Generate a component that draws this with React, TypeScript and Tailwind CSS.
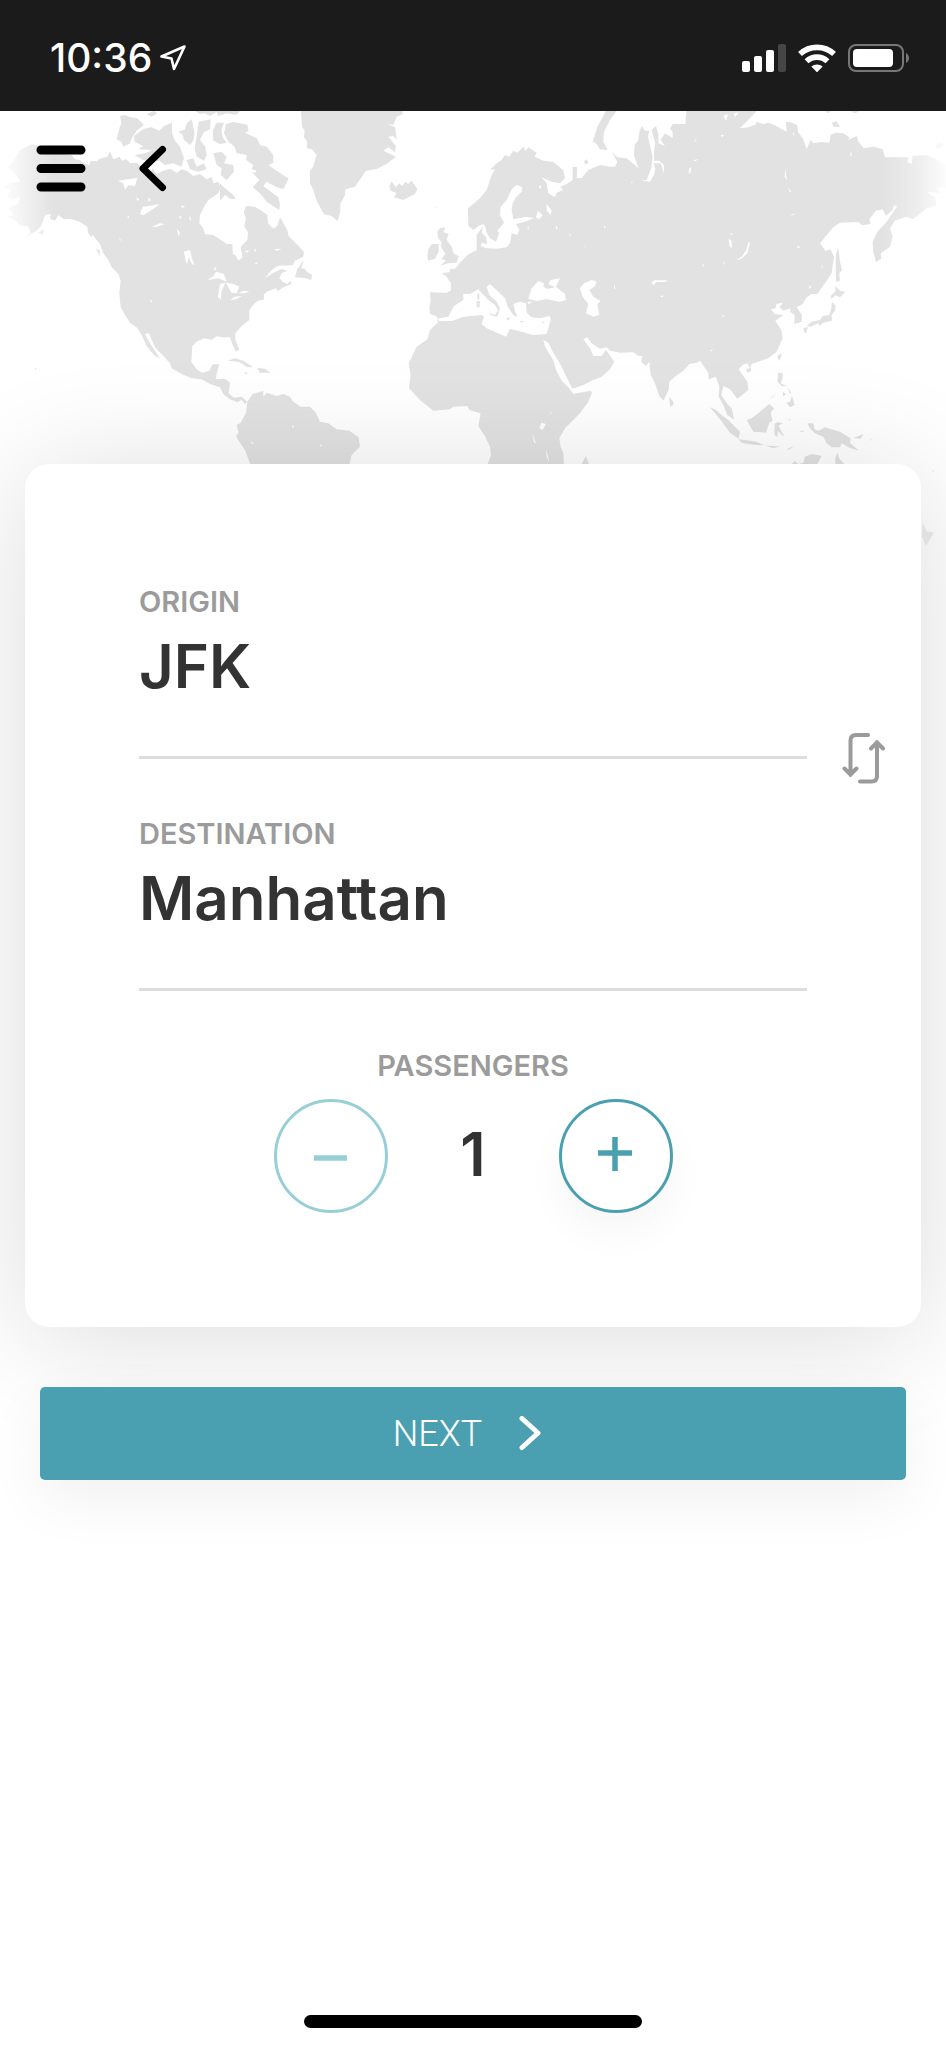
import { useState } from "react";

const poly = (...shapes: string[]) => shapes.map((s) => `M${s}Z`).join("");

const americas = poly(
  // mainland North America
  "95 133 130 140 160 145 185 160 215 165 225 178 240 180 250 190 268 195 272 182 290 184 300 176 322 170 330 154 340 178 360 170 365 182 380 178 390 190 410 188 430 205 450 218 458 205 470 222 490 212 510 206 530 218 545 208 562 214 580 228 600 222 620 238 635 230 640 250 655 245 662 262 655 280 640 290 625 300 610 325 600 345 598 370 608 382 616 403 640 405 660 418 680 432 697 433 699 462 708 468 715 482 728 472 722 440 742 420 744 398 733 378 738 355 731 338 738 318 765 320 785 332 802 345 804 370 820 386 832 378 840 352 852 372 862 390 866 408 890 432 912 456 910 470 885 482 878 496 835 497 815 510 794 535 820 518 845 507 862 512 845 520 838 535 848 545 862 552 872 542 875 552 850 562 832 574 828 565 800 575 791 584 793 598 772 603 755 620 748 632 748 660 725 678 706 700 706 718 718 750 708 755 698 735 690 712 665 712 650 709 635 719 612 715 590 725 577 738 574 785 590 808 606 818 628 812 638 793 658 793 650 820 648 838 675 836 690 848 686 880 702 893 725 890 742 905 735 912 725 900 712 907 690 898 670 882 660 862 630 852 605 838 575 835 545 822 515 805 510 790 490 768 465 742 447 700 435 702 450 730 465 752 480 776 462 765 440 738 425 705 412 684 390 668 375 645 362 620 358 580 362 542 355 522 335 502 325 480 310 460 300 432 285 415 268 385 240 365 210 356 192 358 175 345 165 362 150 356 152 342 135 345 125 375 110 392 70 415 35 440 62 420 92 398 85 380 60 376 45 360 22 350 40 345 25 325 55 310 60 290 38 300 20 288 34 270 10 262 30 250 62 245 45 222 22 200 40 185 60 150",
  "360 48 375 45 392 52 412 55 432 75 410 92 395 115 390 130 370 140 364 126 350 118 358 85 364 70",
  "432 86 455 82 478 92 492 78 516 68 516 100 525 122 540 140 552 175 545 200 520 190 495 195 478 182 450 186 430 180 404 166 440 158 456 150 415 148 430 138 404 126 402 108",
  "535 95 555 88 560 70 575 58 584 100 580 122 570 135 552 120 548 104",
  "596 65 632 58 630 88 612 96 600 120 616 140 620 165 612 182 590 170 584 145 590 110",
  "650 68 672 68 664 90 668 112 680 128 660 132 640 122 638 92",
  "678 72 700 66 742 74 746 92 735 98 770 115 780 135 800 140 820 165 820 188 805 195 830 212 866 236 850 268 830 262 800 245 790 258 835 292 840 312 838 330 800 305 780 280 758 262 778 240 752 212 760 195 738 180 740 165 710 160 704 140 685 125 672 100",
  "660 250 672 262 700 285 708 298 690 296 675 285 660 302",
  "640 160 665 155 680 172 672 190 700 195 702 215 680 240 662 225 665 205 650 195",
  "560 180 580 175 590 200 612 190 620 208 595 215 570 208",
  "440 42 462 33 472 40 455 50",
  "585 33 720 33 710 44 680 40 655 48 650 36 630 48 615 40 600 42",
  // Greenland
  "903 33 906 80 914 92 912 112 922 126 920 145 936 148 950 165 945 180 940 200 930 212 930 250 940 270 950 302 972 343 995 348 1012 363 1020 340 1022 310 1035 285 1036 268 1065 260 1098 212 1130 207 1160 192 1188 170 1150 152 1165 142 1185 156 1188 138 1165 110 1180 108 1190 120 1186 82 1160 72 1180 75 1190 50 1208 42 1208 33",
  // Newfoundland, Vancouver, Kodiak, Cuba, Hispaniola
  "912 480 892 508 885 532 915 534 934 540 936 524 922 516 914 506 904 505",
  "330 488 350 498 374 525 350 515",
  "262 380 282 395 275 412 264 398",
  "288 445 300 452 298 468",
  "114 400 132 388 128 402",
  "682 782 705 775 730 782 760 802 740 800 718 786",
  "772 804 795 806 812 818 780 818",
  "732 817 745 819 738 823",
  "104 803 110 806 107 811",
  // South America
  "742 905 758 882 780 876 790 872 790 890 800 878 830 888 850 882 870 890 880 905 902 920 930 920 948 938 960 965 985 970 1010 988 1048 992 1076 1012 1080 1040 1055 1065 1048 1095 752 1095 735 1050 718 1025 708 1008 716 998 710 975 722 968 738 938"
);

const americasWater = poly(
  "622 540 640 528 648 515 672 522 680 545 655 535",
  "660 552 676 548 664 575 663 598 654 592",
  "678 548 700 552 718 560 710 580 694 578",
  "690 600 705 590 726 588 708 598",
  "716 580 730 572 748 574 735 580",
  "420 342 428 320 445 318 480 312 455 330 430 346",
  "354 242 382 238 412 234 405 258 385 256 375 270 370 250",
  "552 455 570 450 576 475 584 496 576 492 566 472 562 492 556 478",
  "455 382 478 370 494 372 470 380",
  "530 385 540 398 536 410",
  "408 290 418 300 412 302",
  "445 292 452 300 446 306",
  "536 350 544 348 542 358",
  "570 345 574 362 568 358",
  "544 316 556 320 546 324",
  "645 500 650 506 642 512",
  "765 490 775 486 768 494",
  "765 445 770 455 762 452",
  "822 448 846 446 830 452",
  "735 452 750 452 738 458",
  "380 352 388 348 386 354",
  "356 412 366 424 360 420",
  "748 205 770 212 765 218 745 215",
  "920 155 950 165 925 172",
  "450 598 458 604 454 608",
  "752 1022 762 1032 756 1032",
  "962 1032 966 1036 960 1042",
  "876 974 882 980 878 984"
);

const westEurasia = poly(
  // Europe, western Asia and Africa
  "150 577 200 578 212 572 213 550 200 530 185 520 210 516 208 508 225 506 240 488 262 465 290 450 290 405 305 385 312 373 300 375 280 390 265 378 264 325 300 295 320 270 335 225 345 208 330 210 350 190 365 180 375 165 388 170 400 152 412 158 430 140 436 152 445 142 455 148 470 158 464 170 490 182 520 186 550 210 555 235 540 250 515 245 485 232 500 250 505 280 525 292 530 278 550 270 540 260 560 252 578 240 578 200 592 202 590 235 605 234 625 210 660 195 690 200 705 200 712 186 695 155 712 172 740 175 776 205 762 165 764 135 775 120 778 95 785 78 795 92 808 92 804 110 818 170 814 205 800 240 785 242 810 245 822 225 826 205 820 190 842 190 852 220 852 195 838 182 822 182 822 155 826 130 815 90 828 78 835 100 835 130 855 138 842 120 855 100 880 115 895 155 895 120 870 85 880 72 882 72 882 833 868 845 866 870 850 902 838 888 825 850 812 825 808 785 798 798 783 785 788 768 775 768 760 757 720 758 690 752 680 742 660 746 635 730 622 712 610 718 630 745 640 768 665 768 678 750 703 785 690 808 665 830 640 840 610 855 577 866 565 842 545 800 520 758 505 728 490 720 495 740 520 780 528 810 545 842 568 865 580 882 632 872 636 878 625 905 600 940 555 985 538 1015 542 1040 550 1060 552 1095 322 1095 333 1065 330 1040 316 1010 295 978 302 940 268 930 262 918 220 920 210 928 160 932 120 900 87 865 92 825 86 790 110 740 142 718 150 690 173 668 172 650 150 642 148 620 152 605",
  "28 262 34 244 48 262 58 250 66 258 76 245 84 252 95 242 112 268 105 282 70 300 42 292 50 280 32 272",
  "172 395 180 385 196 382 190 396 206 402 200 420 215 440 222 462 236 468 230 488 205 490 180 497 198 482 185 476 196 462 182 438 186 428 175 415",
  "145 448 155 432 176 432 176 455 165 476 145 482 142 470",
  "678 33 710 33 690 60 672 95 670 125 683 150 660 148 650 132 638 125 645 105 652 80 662 62",
  "612 184 620 178 626 188 616 194",
  "868 890 880 905 880 915 870 920",
  "603 1095 618 1068 628 1095",
  "164 322 168 322 166 326"
);

const westWater = poly(
  // Mediterranean
  "172 656 205 650 222 618 250 600 250 582 270 582 295 568 308 582 325 600 345 615 354 630 345 645 325 638 338 648 352 650 360 625 350 605 328 585 320 560 330 553 352 572 375 595 384 622 400 645 412 652 405 632 400 612 420 605 438 610 440 638 455 652 480 655 510 648 512 660 500 702 460 705 425 695 390 686 378 710 355 700 320 685 305 672 312 650 305 645 250 650 215 663 178 664",
  // Baltic
  "395 268 410 255 427 262 425 275 408 292 398 310 395 330 400 358 440 350 462 355 435 365 408 372 418 390 412 404 395 400 390 430 380 442 350 446 320 445 302 438 305 428 322 432 318 412 306 398 308 378 314 374 320 398 330 415 348 425 358 400 352 392 372 368 360 345 362 320 380 300",
  "445 596 455 565 475 543 492 550 490 560 502 567 525 562 505 552 512 540 540 535 528 560 555 582 558 600 540 606 500 597 470 603",
  "600 565 612 550 635 540 650 545 645 558 628 570 640 590 662 603 652 612 658 645 640 650 618 640 625 612 608 590",
  "468 352 474 332 487 346 478 358",
  "500 312 515 332 512 345 500 332",
  "442 606 458 605 445 612",
  "478 985 484 968 498 972 488 990",
  "457 998 468 1030 474 1035 462 1026",
  "498 1048 504 1068 508 1085 500 1072",
  "527 375 534 388 528 386",
  "672 376 677 384 672 384",
  "568 398 573 406 570 408",
  "612 445 620 430 616 440",
  "703 552 706 566 702 566",
  "512 933 515 942 511 940",
  "750 250 760 242 756 248",
  "444 374 447 390 443 386",
  "476 262 484 254 482 266"
);

const westIslands = poly(
  "292 582 298 580 298 598 292 600",
  "290 604 300 603 298 622 290 622",
  "418 662 432 664 424 668",
  "484 668 496 662 490 670",
  "378 655 390 652 386 662"
);

const eastAsia = poly(
  "98 72 136 72 140 33 350 33 330 55 300 85 325 82 350 72 348 65 370 72 385 68 405 76 430 90 440 95 438 65 450 66 472 75 474 95 490 118 500 147 512 120 520 130 545 126 568 128 572 104 588 98 610 100 628 112 625 120 650 108 655 125 672 145 700 140 728 148 735 172 770 172 806 172 802 186 815 192 818 168 860 165 890 178 918 195 918 265 895 262 900 278 860 276 885 290 890 315 860 325 820 357 800 350 765 362 750 385 758 410 750 440 722 460 724 476 708 487 700 455 698 425 712 395 738 368 772 318 762 316 758 330 738 348 728 328 708 332 688 358 692 372 668 376 655 366 600 368 580 382 540 430 556 452 572 448 582 470 575 520 555 550 532 582 515 582 500 592 488 612 470 622 486 645 485 665 463 672 464 645 450 635 452 625 430 632 418 622 428 608 410 612 406 625 393 628 404 642 430 645 406 662 424 690 428 715 410 755 385 775 335 792 330 805 322 790 308 795 296 808 322 845 325 870 292 896 270 868 250 858 244 885 262 912 275 925 282 958 262 945 250 915 236 890 238 860 228 830 206 838 205 818 180 782 170 788 148 792 130 812 98 835",
  "588 460 595 445 600 485 606 510 598 520 600 542 588 545 587 490",
  "586 558 600 572 616 575 600 592 586 586 574 598 572 588 586 575",
  "576 605 587 618 585 632 575 645 576 662 550 668 538 678 535 670 512 680 500 678 515 665 540 660 548 648 568 645 574 625",
  "490 685 504 680 498 700 494 698",
  "412 768 424 760 424 772 416 782",
  "318 808 332 803 334 812 324 818",
  "415 818 428 820 428 835 422 850 440 858 425 858 412 845",
  "440 908 450 905 456 888 464 915 450 922",
  "444 862 454 880 448 880",
  "428 875 438 882 430 890",
  "390 896 408 880 396 894",
  "320 960 335 955 360 935 388 912 402 925 392 938 398 962 388 968 378 998 340 995",
  "210 922 225 928 245 945 262 958 280 975 300 995 296 1016 270 998 248 968 234 950",
  "295 1018 315 1020 350 1025 372 1036 340 1034 305 1028",
  "404 972 412 966 430 970 416 976 422 990 434 1012 422 1002 414 992 412 1012 404 1005",
  "438 1050 464 1036 450 1048",
  "375 1037 400 1038 420 1040 400 1044",
  "476 992 495 992 485 996",
  "446 956 452 958 448 962",
  "502 970 520 970 524 988 535 992 555 982 600 995 632 1015 630 1028 656 1052 632 1045 605 1030 600 1042 575 1042 560 1030 550 1010 525 1000 510 985",
  "640 1014 670 1002 662 1016",
  "690 1014 698 1022 692 1020",
  "452 1095 465 1083 475 1092 490 1088 495 1070 515 1062 545 1068 530 1095",
  "586 1095 586 1075 592 1058 598 1076 616 1095",
  "576 68 590 64 600 82 580 80",
  "885 138 900 128 912 130 908 142 888 144",
  "556 34 575 34 562 40",
  "632 34 658 34 645 40"
);

const newZealand = poly("848 1268 860 1295 882 1298 858 1338 846 1310", "876 1114 884 1108 880 1116");

const eastWater = poly(
  "288 480 305 470 318 452 326 424 329 432 322 460 304 476",
  "36 545 45 541 80 541 80 545 48 546 42 556 36 552",
  "60 587 72 587 66 592",
  "188 492 194 496 188 500",
  "248 644 254 648 248 652",
  "436 205 438 225 442 242 434 230",
  "444 262 456 278 448 274",
  "448 346 468 340 458 346",
  "148 205 154 202 150 222 146 218",
  "160 180 178 178 164 184",
  "265 418 274 420 276 444 270 440",
  "470 446 474 438 482 440",
  "250 48 264 42 258 62",
  "280 42 296 36 286 50",
  "242 104 252 106 246 112",
  "460 95 464 110 458 102",
  "632 150 635 165 631 170",
  "508 556 514 560 508 566",
  "162 125 172 112 166 124",
  "272 398 280 404 272 404",
  "545 498 548 492 546 510",
  "252 482 254 492 250 494",
  "210 752 220 746 214 754"
);

function WorldMap() {
  return (
    <svg viewBox="0 111 946 449" className="absolute inset-x-0 top-0 w-full" aria-hidden="true">
      <defs>
        <linearGradient id="fade-left">
          <stop offset="0" stopColor="#fff" stopOpacity="1" />
          <stop offset="0.4" stopColor="#fff" stopOpacity="0.6" />
          <stop offset="1" stopColor="#fff" stopOpacity="0" />
        </linearGradient>
        <linearGradient id="fade-right">
          <stop offset="0" stopColor="#fff" stopOpacity="0" />
          <stop offset="0.5" stopColor="#fff" stopOpacity="0.35" />
          <stop offset="1" stopColor="#fff" stopOpacity="0.9" />
        </linearGradient>
      </defs>
      <g transform="translate(0 100) scale(0.3333)">
        <path d={americas} fill="#e2e2e2" />
        <path d={americasWater} fill="#fff" />
      </g>
      <g transform="translate(380 100) scale(0.3333)">
        <path d={westEurasia} fill="#e2e2e2" />
        <path d={westWater} fill="#fff" />
        <path d={westIslands} fill="#e2e2e2" />
      </g>
      <g transform="translate(640 100) scale(0.3333)">
        <path d={eastAsia} fill="#e2e2e2" />
        <path d={newZealand} fill="#ededed" />
        <path d={eastWater} fill="#fff" />
      </g>
      <rect x="0" y="111" width="54" height="150" fill="url(#fade-left)" />
      <rect x="882" y="111" width="64" height="150" fill="url(#fade-right)" />
    </svg>
  );
}

function StatusBar() {
  return (
    <div className="flex h-[111px] items-center justify-between bg-[#1b1b1b] pr-9 pl-[50px] pt-1 text-white">
      <div className="flex items-center gap-2">
        <span className="text-[39px] leading-[46px] font-medium">10:36</span>
        <svg width="26" height="26" viewBox="0 0 26 26" fill="none" stroke="currentColor" strokeWidth="2.6" strokeLinejoin="round">
          <path d="M24.500 1.500 14 24 11.500 13.500 1.500 11.500Z" />
        </svg>
      </div>
      <div className="flex items-center gap-3">
        <svg width="44" height="28" viewBox="0 0 44 28" fill="currentColor">
          <rect x="0" y="17" width="8" height="11" rx="2" />
          <rect x="12" y="12" width="8" height="16" rx="2" />
          <rect x="24" y="6" width="8" height="22" rx="2" />
          <rect x="36" y="0" width="8" height="28" rx="2" fill="#464646" />
        </svg>
        <svg width="38" height="28" viewBox="0 0 38 28" fill="none" stroke="currentColor" strokeWidth="5.6">
          <path d="M2 10a25 25 0 0 1 34 0" />
          <path d="M8.500 17.200a15.500 15.500 0 0 1 21 0" />
          <path d="M13.300 22.600a8.500 8.500 0 0 1 11.400 0L19 28.300Z" fill="currentColor" stroke="none" />
        </svg>
        <svg width="62" height="28" viewBox="0 0 62 28">
          <rect x="1" y="1" width="54" height="26" rx="7" fill="none" stroke="#777" strokeWidth="2" />
          <rect x="5" y="5" width="40" height="18" rx="4" fill="#fff" />
          <path d="M58 9c4 2 4 8 0 10Z" fill="#777" />
        </svg>
      </div>
    </div>
  );
}

function Field({ id, label, value, onChange }: { id: string; label: string; value: string; onChange: (v: string) => void }) {
  return (
    <div className="border-b-[3px] border-[#dddddd]">
      <label htmlFor={id} className="block text-[29px] leading-9 font-semibold text-[#9b9b9b]">
        {label}
      </label>
      <input
        id={id}
        value={value}
        onChange={(e) => onChange(e.target.value)}
        className="mt-2.5 mb-[54px] block h-[72px] w-full bg-transparent text-[60px] leading-[72px] font-semibold text-[#333] outline-none"
      />
    </div>
  );
}

export default function App() {
  const [origin, setOrigin] = useState("JFK");
  const [destination, setDestination] = useState("Manhattan");
  const [passengers, setPassengers] = useState(1);

  const swap = () => {
    setOrigin(destination);
    setDestination(origin);
  };

  return (
    <div className="flex min-h-screen flex-col bg-white font-['Inter','Liberation_Sans',sans-serif]">
      <StatusBar />
      <main className="relative flex flex-1 flex-col">
        <WorldMap />

        <header className="relative flex items-center gap-[52px] px-9 pt-[34px]">
          <button type="button" aria-label="Menu">
            <svg width="50" height="48" viewBox="0 0 50 48" stroke="#000" strokeWidth="9" strokeLinecap="round">
              <path d="M5 5H45M5 23.500H45M5 42H45" />
            </svg>
          </button>
          <button type="button" aria-label="Back">
            <svg width="30" height="48" viewBox="0 0 30 48" fill="none" stroke="#000" strokeWidth="7" strokeLinecap="round" strokeLinejoin="round">
              <path d="M24.500 4.500 5 23.500 24.500 42.500" />
            </svg>
          </button>
        </header>

        <section className="relative mx-[25px] mt-[271px] rounded-[24px] bg-white pt-[120px] pb-[114px] shadow-[0_10px_120px_rgba(0,0,0,0.14)]">
          <div className="flex items-start pl-[114px]">
            <div className="grid min-w-0 flex-1 gap-[57px]">
              <Field id="origin" label="ORIGIN" value={origin} onChange={setOrigin} />
              <Field id="destination" label="DESTINATION" value={destination} onChange={setDestination} />
            </div>
            <div className="mt-[148px] flex w-[114px] justify-center">
              <button type="button" aria-label="Swap origin and destination" onClick={swap}>
                <svg width="44" height="52" viewBox="0 0 44 52" fill="none" stroke="#9b9b9b" strokeWidth="4" strokeLinecap="round" strokeLinejoin="round">
                  <path d="M26 3H14Q8.500 3 8.500 8.500V43M2.500 36.500 8.500 42.500 14.500 36.500" />
                  <path d="M18 49.500H29.500Q35 49.500 35 44V10M29 16.500 35 10.500 41 16.500" />
                </svg>
              </button>
            </div>
          </div>

          <div className="mt-[57px] text-center">
            <div id="passengers" className="text-[29px] leading-9 font-semibold text-[#9b9b9b]">
              PASSENGERS
            </div>
            <div className="mt-[15px] flex items-center justify-center" role="group" aria-labelledby="passengers">
              <button
                type="button"
                aria-label="Remove passenger"
                onClick={() => setPassengers(Math.max(1, passengers - 1))}
                className="flex size-[114px] items-center justify-center rounded-full border-[3px] border-[#98cfd6] text-[#98cfd6]"
              >
                <svg width="36" height="38" viewBox="0 0 36 38" stroke="currentColor" strokeWidth="5.5">
                  <path d="M1 21H34" />
                </svg>
              </button>
              <output className="w-[171px] pb-1 text-[60px] leading-[72px] font-semibold text-[#333]">{passengers}</output>
              <button
                type="button"
                aria-label="Add passenger"
                onClick={() => setPassengers(passengers + 1)}
                className="flex size-[114px] items-center justify-center rounded-full border-[3px] border-[#4aa0b0] bg-white text-[#4aa0b0] shadow-[0_20px_40px_rgba(0,0,0,0.04)]"
              >
                <svg width="36" height="38" viewBox="0 0 36 38" stroke="currentColor" strokeWidth="5.5">
                  <path d="M0 16H34M17 -2V34" className="overflow-visible" />
                </svg>
              </button>
            </div>
          </div>
        </section>

        <button
          type="button"
          className="relative mx-10 mt-[60px] flex h-[93px] items-center justify-center gap-[37px] rounded-[5px] bg-[#4aa0b0] pr-3 font-['Roboto','Liberation_Sans',sans-serif] text-[36px] font-light text-white shadow-[0_20px_60px_rgba(0,0,0,0.06)]"
        >
          NEXT
          <svg width="22" height="36" viewBox="0 0 22 36" fill="none" stroke="currentColor" strokeWidth="5" strokeLinecap="round" strokeLinejoin="round">
            <path d="M3 2.500 19 17 3 31.500" />
          </svg>
        </button>

        <div className="mx-auto mt-auto mb-5 h-[13px] w-[338px] rounded-full bg-black" />
      </main>
    </div>
  );
}
